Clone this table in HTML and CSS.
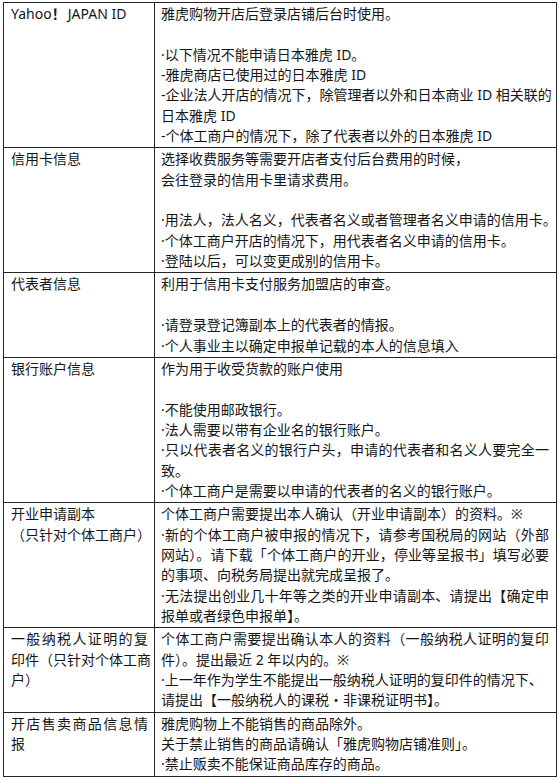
FILE: index.html
```html
<!DOCTYPE html>
<html lang="zh-CN">
<head>
<meta charset="utf-8">
<title>店铺申请信息</title>
<link rel="stylesheet" href="styles.css">
</head>
<body>
<table class="info">
  <tr>
    <td class="k"><span class="ln">Yahoo<b class="bang">！</b>JAPAN ID</span></td>
    <td class="v">
      <span class="ln">雅虎购物开店后登录店铺后台时使用。</span>
      <span class="ln blank"></span>
      <span class="ln">·以下情况不能申请日本雅虎 ID。</span>
      <span class="ln">-雅虎商店已使用过的日本雅虎 ID</span>
      <span class="ln full">-企业法人开店的情况下，除管理者以外和日本商业 ID 相关联的</span>
      <span class="ln">日本雅虎 ID</span>
      <span class="ln">-个体工商户的情况下，除了代表者以外的日本雅虎 ID</span>
    </td>
  </tr>
  <tr>
    <td class="k"><span class="ln">信用卡信息</span></td>
    <td class="v">
      <span class="ln">选择收费服务等需要开店者支付后台费用的时候，</span>
      <span class="ln">会往登录的信用卡里请求费用。</span>
      <span class="ln blank"></span>
      <span class="ln">·用法人，法人名义，代表者名义或者管理者名义申请的信用卡。</span>
      <span class="ln">·个体工商户开店的情况下，用代表者名义申请的信用卡。</span>
      <span class="ln">·登陆以后，可以变更成别的信用卡。</span>
    </td>
  </tr>
  <tr>
    <td class="k"><span class="ln">代表者信息</span></td>
    <td class="v">
      <span class="ln">利用于信用卡支付服务加盟店的审查。</span>
      <span class="ln blank"></span>
      <span class="ln">·请登录登记簿副本上的代表者的情报。</span>
      <span class="ln">·个人事业主以确定申报单记载的本人的信息填入</span>
    </td>
  </tr>
  <tr>
    <td class="k"><span class="ln">银行账户信息</span></td>
    <td class="v">
      <span class="ln">作为用于收受货款的账户使用</span>
      <span class="ln blank"></span>
      <span class="ln">·不能使用邮政银行。</span>
      <span class="ln">·法人需要以带有企业名的银行账户。</span>
      <span class="ln full">·只以代表者名义的银行户头，申请的代表者和名义人要完全一</span>
      <span class="ln">致。</span>
      <span class="ln">·个体工商户是需要以申请的代表者的名义的银行账户。</span>
    </td>
  </tr>
  <tr>
    <td class="k">
      <span class="ln">开业申请副本</span>
      <span class="ln">（只针对个体工商户）</span>
    </td>
    <td class="v">
      <span class="ln">个体工商户需要提出本人确认（开业申请副本）的资料。※</span>
      <span class="ln full">·新的个体工商户被申报的情况下，请参考国税局的网站（外部</span>
      <span class="ln full">网站）。请下载「个体工商户的开业，停业等呈报书」填写必要</span>
      <span class="ln">的事项、向税务局提出就完成呈报了。</span>
      <span class="ln full">·无法提出创业几十年等之类的开业申请副本、请提出【确定申</span>
      <span class="ln">报单或者绿色申报单】。</span>
    </td>
  </tr>
  <tr>
    <td class="k">
      <span class="ln full">一般纳税人证明的复</span>
      <span class="ln">印件（只针对个体工商</span>
      <span class="ln">户）</span>
    </td>
    <td class="v">
      <span class="ln full">个体工商户需要提出确认本人的资料（一般纳税人证明的复印</span>
      <span class="ln">件）。提出最近 2 年以内的。※</span>
      <span class="ln">·上一年作为学生不能提出一般纳税人证明的复印件的情况下、</span>
      <span class="ln">请提出【一般纳税人的课税・非课税证明书】。</span>
    </td>
  </tr>
  <tr>
    <td class="k">
      <span class="ln full">开店售卖商品信息情</span>
      <span class="ln">报</span>
    </td>
    <td class="v">
      <span class="ln">雅虎购物上不能销售的商品除外。</span>
      <span class="ln">关于禁止销售的商品请确认「雅虎购物店铺准则」。</span>
      <span class="ln">·禁止贩卖不能保证商品库存的商品。</span>
    </td>
  </tr>
</table>
</body>
</html>
```
FILE: styles.css
```css
html, body {
  margin: 0;
  padding: 0;
  background: #ffffff;
}

body {
  padding: 2px 0 0 3px;
  font-family: "Noto Sans", "Noto Sans CJK SC", sans-serif;
  font-size: 14px;
  color: #161616;
}

.info {
  border-collapse: collapse;
  width: 554px;
  table-layout: fixed;
}

.info td {
  border: 1px solid #262626;
  vertical-align: top;
  padding: 1px 7px 1px 6px;
  line-height: 20.35px;
}

.info td.k {
  width: 137px;
  padding-left: 7px;
  padding-right: 6px;
}

.ln {
  display: block;
  white-space: nowrap;
}

.ln.blank {
  height: 20.35px;
}

.ln.full {
  text-align: justify;
  text-align-last: justify;
}

.bang {
  font-weight: 700;
  margin-right: 2px;
}
```
